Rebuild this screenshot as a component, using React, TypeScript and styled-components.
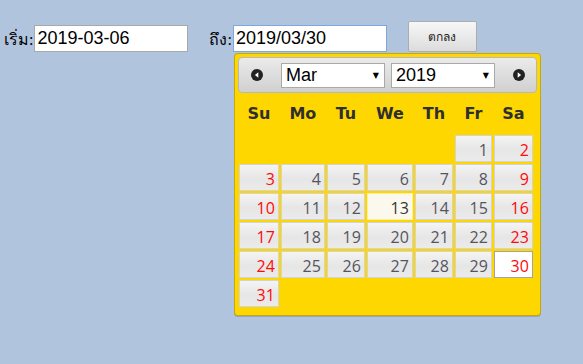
import styled, {createGlobalStyle} from 'styled-components';

const GlobalStyle = createGlobalStyle`
  body {
    margin: 0;
    background: #b0c4de;
    font-family: 'Liberation Serif', serif;
  }
`;

const dayNames = ['Su', 'Mo', 'Tu', 'We', 'Th', 'Fr', 'Sa'];
const firstWeekday = 5; // March 1st 2019 is a Friday
const daysInMonth = 31;
const today = 13;
const selected = 30;

const PrevIcon = () => (
  <svg width="12" height="12" viewBox="0 0 12 12">
    <circle cx="6" cy="6" r="6" fill="#222"/>
    <path d="M7.3 3.2 L3.9 6 L7.3 8.8 Z" fill="#fff"/>
  </svg>
);

const NextIcon = () => (
  <svg width="12" height="12" viewBox="0 0 12 12">
    <circle cx="6" cy="6" r="6" fill="#222"/>
    <path d="M4.7 3.2 L8.1 6 L4.7 8.8 Z" fill="#fff"/>
  </svg>
);

export default () => {
  const blanks = Array.from({length: firstWeekday});
  const days = Array.from({length: daysInMonth}, (_, i) => i + 1);

  return (
    <Page>
      <GlobalStyle/>
      <Toolbar>
        <Field>
          <Label>เริ่ม:</Label>
          <DateInput defaultValue="2019-03-06"/>
        </Field>
        <Field $gap={21}>
          <Label>ถึง:</Label>
          <InputAnchor>
            <DateInput defaultValue="2019/03/30" $focused/>
            <Calendar>
              <CalendarHeader>
                <NavButton><PrevIcon/></NavButton>
                <SelectWrap $gap={18}>
                  <Select defaultValue="Mar">
                    <option>Mar</option>
                  </Select>
                </SelectWrap>
                <SelectWrap $gap={6}>
                  <Select defaultValue="2019">
                    <option>2019</option>
                  </Select>
                </SelectWrap>
                <NavButton $gap={18}><NextIcon/></NavButton>
              </CalendarHeader>
              <DayGrid>
                {dayNames.map(name => <DayName key={name}>{name}</DayName>)}
                {blanks.map((_, index) => <span key={'b' + index}/>)}
                {days.map(day => {
                  const weekday = (firstWeekday + day - 1) % 7;
                  return (
                    <DayCell
                      key={day}
                      $weekend={weekday === 0 || weekday === 6}
                      $today={day === today}
                      $selected={day === selected}
                    >
                      {day}
                    </DayCell>
                  );
                })}
              </DayGrid>
            </Calendar>
          </InputAnchor>
        </Field>
        <OkButton>ตกลง</OkButton>
      </Toolbar>
    </Page>
  );
}

const Page = styled.div`
  min-height: 364px;
`;

const Toolbar = styled.div`
  display: flex;
  align-items: flex-start;
  padding: 21px 0 0 4px;
`;

const Field = styled.div<{$gap?: number}>`
  display: flex;
  align-items: center;
  gap: 1px;
  margin-top: 4px;
  margin-left: ${props => props.$gap || 0}px;
`;

const Label = styled.label`
  font-family: 'Liberation Serif', serif;
  font-size: 16px;
  color: #000;
  padding-top: 2px;
`;

const InputAnchor = styled.div`
  position: relative;
  display: flex;
`;

const DateInput = styled.input<{$focused?: boolean}>`
  box-sizing: border-box;
  width: 154px;
  height: 27px;
  padding: 0 2px;
  border: 1px solid ${props => props.$focused ? '#7ea6e0' : '#a9a9a9'};
  background: #fff;
  font-family: 'Liberation Sans', Arial, sans-serif;
  font-size: 18px;
  color: #000;
  outline: none;
`;

const OkButton = styled.button`
  box-sizing: border-box;
  width: 69px;
  height: 31px;
  margin-left: 21px;
  border: 1px solid #adadad;
  border-radius: 2px;
  background: linear-gradient(#f7f7f7, #dcdcdc);
  font-size: 12px;
  color: #222;
`;

const Calendar = styled.div`
  position: absolute;
  top: 28px;
  left: 1px;
  z-index: 2;
  box-sizing: border-box;
  width: 307px;
  padding: 3px 3px 8px 3px;
  border: 1px solid rgba(90, 80, 40, 0.35);
  border-radius: 4px;
  background: #ffd700;
  box-shadow: 0 1px 0 rgba(0, 0, 0, 0.15);
`;

const CalendarHeader = styled.div`
  box-sizing: border-box;
  display: flex;
  align-items: center;
  height: 36px;
  padding: 0 12px;
  border: 1px solid #b8b8b8;
  border-radius: 4px;
  background: linear-gradient(#ebebeb, #d0d0d0);
`;

const NavButton = styled.span<{$gap?: number}>`
  display: flex;
  margin-left: ${props => props.$gap || 0}px;
`;

const SelectWrap = styled.div<{$gap: number}>`
  position: relative;
  display: flex;
  margin-left: ${props => props.$gap}px;

  &::after {
    content: '▼';
    position: absolute;
    right: 6px;
    top: 8px;
    font-size: 8px;
    color: #000;
    pointer-events: none;
    font-family: 'DejaVu Sans', sans-serif;
  }
`;

const Select = styled.select`
  appearance: none;
  box-sizing: border-box;
  width: 104px;
  height: 25px;
  padding: 0 0 0 4px;
  border: 1px solid #a9a9a9;
  border-radius: 0;
  background: #fff;
  font-family: 'Liberation Sans', Arial, sans-serif;
  font-size: 18px;
  color: #000;
  outline: none;
`;

const DayGrid = styled.div`
  display: grid;
  grid-template-columns: 40px 44px 38px 46px 38px 37px 39px;
  grid-template-rows: 40px;
  grid-auto-rows: 27px;
  column-gap: 2px;
  row-gap: 2px;
  margin-left: 1px;
`;

const DayName = styled.div`
  display: flex;
  align-items: center;
  justify-content: center;
  padding-top: 1px;
  box-sizing: border-box;
  font-family: 'DejaVu Sans', Verdana, sans-serif;
  font-weight: bold;
  font-size: 16px;
  color: #2f2f2f;
`;

const DayCell = styled.div<{$weekend: boolean; $today: boolean; $selected: boolean}>`
  box-sizing: border-box;
  display: flex;
  align-items: center;
  justify-content: flex-end;
  padding: 2px 3px 0 0;
  border: 1px solid ${props => props.$selected ? '#a3a3a3' : props.$today ? '#fcefa1' : '#d3d3d3'};
  background: ${props => props.$selected
    ? '#fff'
    : props.$today
      ? '#fbf9ee'
      : 'linear-gradient(#f4f4f4, #e6e6e6 55%, #ebebeb)'};
  font-family: 'Open Sans', 'Noto Sans', sans-serif;
  font-size: 16px;
  color: ${props => props.$weekend ? '#ff0a0a' : props.$today ? '#363636' : '#555560'};
`;
